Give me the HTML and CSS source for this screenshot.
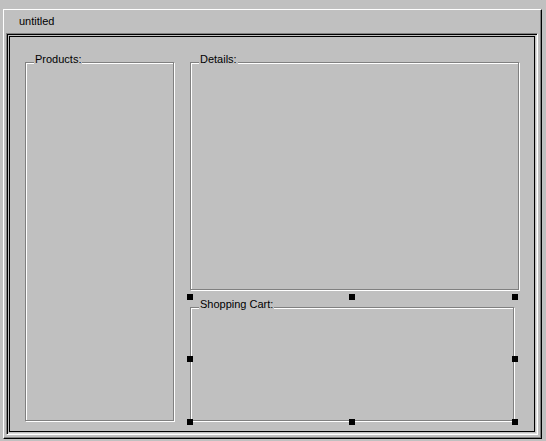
FILE: index.html
```html
<html><head>
<meta charset="UTF-8">
<title>untitled</title>
<link rel="stylesheet" href="styles.css">
</head>
<body>
    <div class="window">
        <div class="titlebar">untitled</div>

        <div class="sunken">
            <div class="frame">
                <div class="group products">
                    <div class="group-label">Products:</div>
                </div>

                <div class="right-col">
                    <div class="group details">
                        <div class="group-label">Details:</div>
                    </div>

                    <div class="group cart">
                        <div class="group-label">Shopping Cart:</div>
                        <!-- selection handles -->
                        <span class="handle h-tl"></span>
                        <span class="handle h-tm"></span>
                        <span class="handle h-tr"></span>
                        <span class="handle h-ml"></span>
                        <span class="handle h-mr"></span>
                        <span class="handle h-bl"></span>
                        <span class="handle h-bm"></span>
                        <span class="handle h-br"></span>
                    </div>
                </div>
            </div>
        </div>
    </div>
</body></html>
```

FILE: styles.css
```css
* {
    margin: 0;
    padding: 0;
    box-sizing: border-box;
    font-family: 'Liberation Sans', Arial, sans-serif;
}

body {
    background: #c0c0c0;
    color: #000;
    font-size: 11px;
    line-height: 13px;
    padding: 9px 0 0 3px;
}

.window {
    width: 539px;
    height: 430px;
    border-top: 1px solid #fff;
    border-left: 1px solid #fff;
    border-right: 1px solid #000;
    border-bottom: 1px solid #000;
    box-shadow: inset -1px -1px 0 #808080;
}

.titlebar {
    height: 23px;
    padding: 5px 0 0 15px;
}

.sunken {
    width: 532px;
    height: 402px;
    margin-left: 2px;
    padding: 2px;
    border-top: 1px solid #808080;
    border-left: 1px solid #808080;
    border-right: 1px solid #fff;
    border-bottom: 1px solid #fff;
    box-shadow: inset 1px 1px 0 #000, inset -1px -1px 0 #dfdfdf;
}

.frame {
    width: 526px;
    height: 396px;
    border: 1px solid #000;
    padding: 25px 0 0 15px;
    display: flex;
    gap: 16px;
}

.group {
    border: 1px solid #808080;
    box-shadow: inset 1px 1px 0 #fff, 1px 1px 0 #fff;
}

.group-label {
    width: fit-content;
    height: 13px;
    margin: -10px 0 0 8px;
    padding: 0 1px;
    background: #c0c0c0;
    white-space: nowrap;
}

.products {
    width: 149px;
    height: 359px;
}

.right-col {
    display: flex;
    flex-direction: column;
    gap: 17px;
}

.details {
    width: 329px;
    height: 228px;
}

.cart {
    position: relative;
    width: 324px;
    height: 114px;
}

.handle {
    position: absolute;
    width: 6px;
    height: 6px;
    background: #000;
}

.h-tl { left: -4px; top: -14px; }
.h-tm { left: 158px; top: -14px; }
.h-tr { left: 321px; top: -14px; }
.h-ml { left: -4px; top: 48px; }
.h-mr { left: 321px; top: 48px; }
.h-bl { left: -4px; top: 111px; }
.h-bm { left: 158px; top: 111px; }
.h-br { left: 321px; top: 111px; }
```
